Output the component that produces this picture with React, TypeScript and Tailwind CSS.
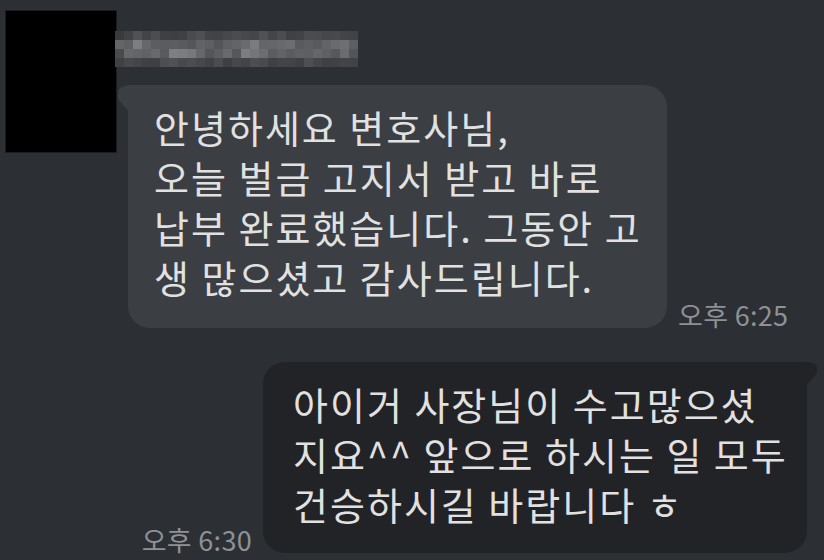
import React from 'react'

const font = { fontFamily: '"Noto Sans CJK KR", "Noto Sans", sans-serif' }

// pixelated (mosaic) name placeholder
function NameMosaic(){
  const cols = 27, rows = 4, cell = 9
  const cells: React.ReactNode[] = []
  for(let r=0;r<rows;r++){
    for(let c=0;c<cols;c++){
      const n = Math.abs(Math.sin(r*12.9898 + c*78.233)*43758.5453) % 1
      const edge = r===0 || r===rows-1
      const fade = c===0 || c===cols-1 ? 0.7 : 1
      const v = Math.round(((edge ? 0x3e : 0x54) + n*(edge ? 0x12 : 0x2c)) * fade + (1-fade)*0x2c)
      cells.push(<rect key={r+'-'+c} x={c*cell} y={r*cell} width={cell} height={cell} fill={`rgb(${v},${v+1},${v+4})`} />)
    }
  }
  return (
    <svg width={cols*cell} height={rows*cell} viewBox={`0 0 ${cols*cell} ${rows*cell}`} className="block" style={{filter:'blur(0.6px)'}}>
      {cells}
    </svg>
  )
}

function Time({ children }:{ children:React.ReactNode }){
  return <div className="text-[27px] leading-[30px] tracking-[0.3px] text-[#8e9196] whitespace-nowrap -mb-[2px]" style={font}>{children}</div>
}

export default function App(){
  return (
    <div className="w-full h-[560px] overflow-hidden bg-[#2c2f34] pt-[10px]" style={font}>
      <div className="flex pl-[5px]">
        <div className="w-[112px] h-[143px] bg-black border border-[#1c1d20] shrink-0" />
        <div className="flex flex-col">
          <div className="mt-[21px] -ml-[2px]">
            <NameMosaic />
          </div>
          <div className="flex items-end gap-[11px] mt-[18px] ml-[11px]">
            <div className="relative w-[539px] bg-[#3b3e43] rounded-[22px] rounded-tl-none pl-[26px] pt-[17px] pb-[26px] text-[38px] leading-[50px] tracking-[2px] text-[#e1e1e1] whitespace-nowrap">
              <svg className="absolute -left-[11px] top-0" width="12" height="28" viewBox="0 0 12 28">
                <path d="M12 0 L6 1.5 Q1 3 1 8 L1 14 L12 27 Z" fill="#3b3e43" />
              </svg>
              안녕하세요 변호사님,<br />
              오늘 벌금 고지서 받고 바로<br />
              납부 완료했습니다. 그동안 고<br />
              생 많으셨고 감사드립니다.
            </div>
            <Time>오후 6:25</Time>
          </div>
        </div>
      </div>

      <div className="flex justify-end items-end gap-[11px] pr-[17px] mt-[34px]">
        <Time>오후 6:30</Time>
        <div className="relative w-[544px] bg-[#222327] rounded-[22px] rounded-tr-none pl-[30px] pt-[17px] pb-[24px] text-[38px] leading-[50px] tracking-[2px] text-[#e1e1e1] whitespace-nowrap">
          <svg className="absolute -right-[11px] top-0" width="12" height="25" viewBox="0 0 12 25">
            <path d="M0 0 L6 1 Q11 2 11 7 L11 11 L0 24 Z" fill="#222327" />
          </svg>
          아이거 사장님이 수고많으셨<br />
          지요^^ 앞으로 하시는 일 모두<br />
          건승하시길 바랍니다 ㅎ
        </div>
      </div>
    </div>
  )
}
